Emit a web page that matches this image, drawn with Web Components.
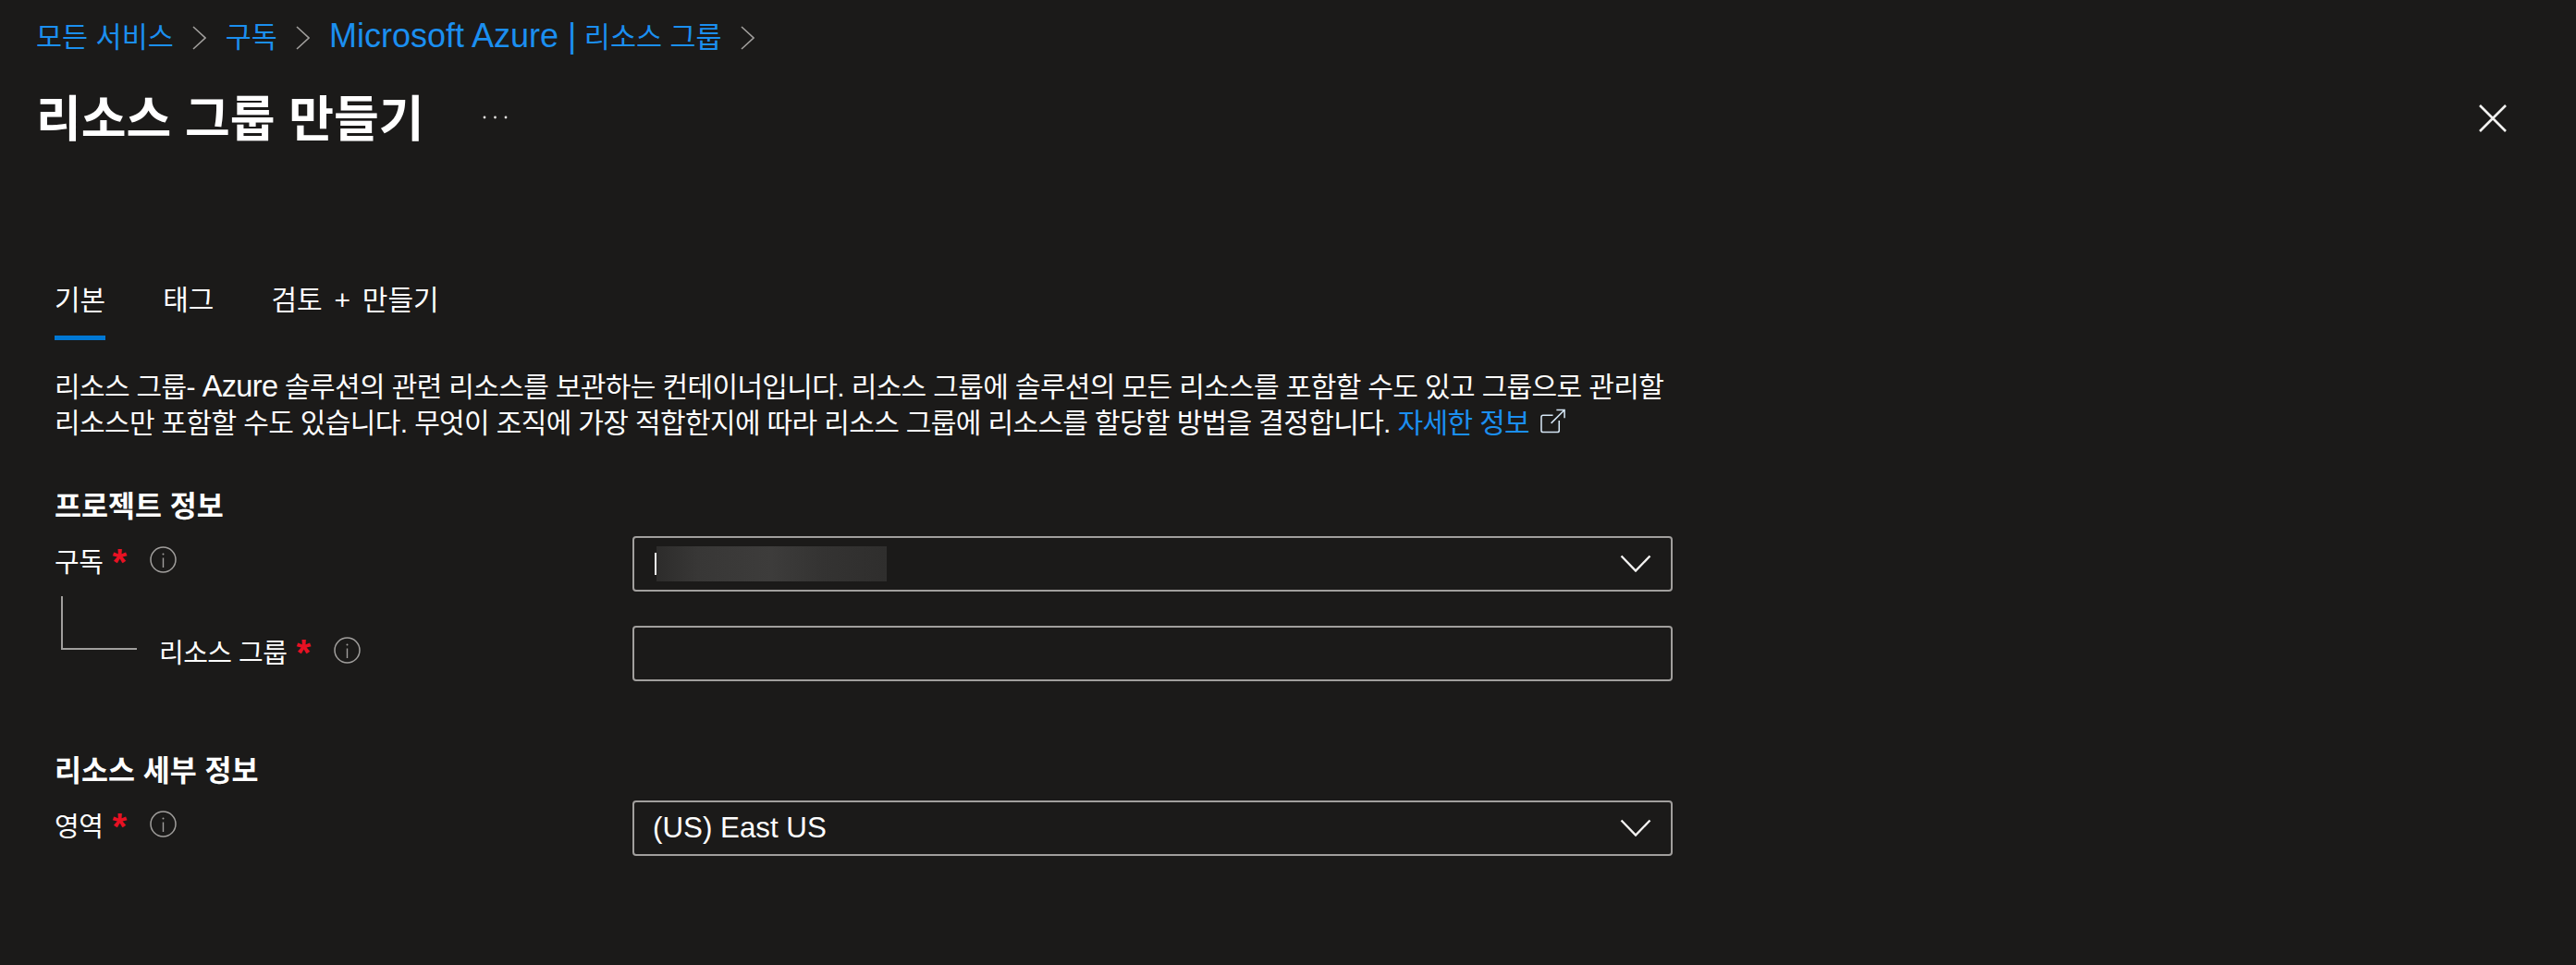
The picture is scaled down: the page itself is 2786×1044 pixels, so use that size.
<!DOCTYPE html>
<html lang="ko">
<head>
<meta charset="utf-8">
<title>리소스 그룹 만들기</title>
<style>
html,body{margin:0;padding:0;background:#1b1a19;}
body{width:2786px;height:1044px;overflow:hidden;color:#fff;font-family:"Liberation Sans","Noto Sans CJK KR",sans-serif;font-size:30px;}
.lat{font-size:36px;}
.az{font-size:32.5px;}
</style>
</head>
<body>
<az-blade>
  <az-breadcrumb slot="crumbs">
    <az-crumb>모든 서비스</az-crumb>
    <az-crumb>구독</az-crumb>
    <az-crumb><span class="lat">Microsoft Azure |</span> 리소스 그룹</az-crumb>
  </az-breadcrumb>
  <az-title slot="title">리소스 그룹 만들기</az-title>
  <az-tabs>
    <az-tab active>기본</az-tab>
    <az-tab>태그</az-tab>
    <az-tab>검토 + 만들기</az-tab>
  </az-tabs>
  <az-desc>리소스 그룹- <span class="az">Azure</span> 솔루션의 관련 리소스를 보관하는 컨테이너입니다. 리소스 그룹에 솔루션의 모든 리소스를 포함할 수도 있고 그룹으로 관리할<br>리소스만 포함할 수도 있습니다. 무엇이 조직에 가장 적합한지에 따라 리소스 그룹에 리소스를 할당할 방법을 결정합니다. <az-link>자세한 정보</az-link></az-desc>
  <az-section style="margin-top:51px">프로젝트 정보</az-section>
  <az-row style="margin-top:12px" label-top="-2">
    <az-label slot="label">구독</az-label>
    <az-select slot="control" blurred></az-select>
  </az-row>
  <az-row style="margin-top:37px" label-top="-1">
    <az-tree slot="label"></az-tree>
    <az-label slot="label">리소스 그룹</az-label>
    <az-input slot="control"></az-input>
  </az-row>
  <az-section style="margin-top:77px">리소스 세부 정보</az-section>
  <az-row style="margin-top:12px" label-top="-2">
    <az-label slot="label">영역</az-label>
    <az-select slot="control">(US) East US</az-select>
  </az-row>
</az-blade>
<script>
function def(name, html, setup){
  customElements.define(name, class extends HTMLElement{
    constructor(){super();this.attachShadow({mode:'open'}).innerHTML=html;}
    connectedCallback(){ if(setup) setup(this); }
  });
}
def('az-blade',`<style>
  :host{display:block;position:relative;height:1044px;}
  header{padding-left:39px;}
  main{padding-left:59px;}
  .close{position:absolute;left:2681px;top:113px;width:30px;height:30px;display:block;}
</style>
<header><slot name="crumbs"></slot><slot name="title"></slot></header>
<svg class="close" viewBox="0 0 30 30" aria-hidden="true"><path d="M1 1L29 29M29 1L1 29" stroke="#f3f2f1" stroke-width="2.6" fill="none"/></svg>
<main><slot></slot></main>`);

def('az-breadcrumb',`<style>
  :host{display:flex;align-items:center;height:76px;}
</style><slot></slot>`);

def('az-crumb',`<style>
  :host{display:inline-flex;align-items:center;color:#1b8ff0;font-size:30.5px;white-space:nowrap;}
  svg{width:15px;height:26px;margin:6px 20.5px 0 20.5px;display:block;}
</style><span><slot></slot></span><svg viewBox="0 0 15 26" aria-hidden="true"><path d="M1 1L14 13L1 25" fill="none" stroke="#a19f9d" stroke-width="1.6"/></svg>`);

def('az-title',`<style>
  :host{display:flex;align-items:center;height:98px;font-size:53px;font-weight:700;color:#fff;white-space:nowrap;}
  .more{margin-left:63px;width:27px;height:6px;display:block;margin-top:4px;}
</style><slot></slot><svg class="more" viewBox="0 0 27 6" aria-hidden="true"><circle cx="2" cy="3" r="1.4" fill="#e1dfdd"/><circle cx="13.5" cy="3" r="1.4" fill="#e1dfdd"/><circle cx="25" cy="3" r="1.4" fill="#e1dfdd"/></svg>`);

def('az-tabs',`<style>
  :host{display:flex;gap:62px;margin-top:108px;}
</style><slot></slot>`);

def('az-tab',`<style>
  :host{display:block;height:86px;box-sizing:border-box;padding-top:24px;line-height:38px;font-size:30px;word-spacing:4.5px;color:#fff;white-space:nowrap;border-bottom:5px solid transparent;}
  :host([active]){border-bottom-color:#0078d4;}
</style><slot></slot>`);

def('az-desc',`<style>
  :host{display:block;margin-top:31px;font-size:30px;letter-spacing:-.63px;line-height:39px;color:#fff;white-space:nowrap;}
</style><slot></slot>`);

def('az-link',`<style>
  :host{display:inline;color:#1b8ff0;}
  svg{width:27px;height:27px;display:inline-block;vertical-align:-1px;margin-left:12px;}
</style><slot></slot><svg viewBox="0 0 28 27" aria-hidden="true"><path d="M14 7H3Q1 7 1 9V24Q1 26 3 26H19Q21 26 21 24V13M12 16L27 1M18 1H27V10" fill="none" stroke="#d5e6f5" stroke-width="1.6"/></svg>`);

def('az-section',`<style>
  :host{display:block;height:40px;line-height:40px;font-size:31.5px;font-weight:700;color:#fff;white-space:nowrap;}
</style><slot></slot>`);

def('az-row',`<style>
  :host{display:grid;grid-template-columns:625px 1125px;}
  .l{display:flex;align-items:flex-start;}
</style><div class="l"><slot name="label"></slot></div><slot name="control"></slot>`);

def('az-label',`<style>
  :host{display:flex;align-items:center;height:56px;font-size:29px;letter-spacing:-.5px;color:#fff;white-space:nowrap;}
  .s{color:#e81123;margin-left:10px;font-size:40px;font-weight:700;line-height:1;align-self:flex-start;margin-top:10px;width:15px;}
  svg{width:29px;height:29px;margin-left:26px;display:block;margin-top:-2px;}
</style><slot></slot><span class="s">*</span><svg viewBox="0 0 29 29" aria-hidden="true"><circle cx="14.5" cy="14.5" r="13.5" fill="none" stroke="#a19f9d" stroke-width="1.5"/><path d="M14.5 12.5V23" stroke="#a19f9d" stroke-width="1.4"/><circle cx="14.5" cy="8.5" r="1" fill="#a19f9d"/></svg>`,
  el=>{ const t=el.closest('az-row'); if(t){ const v=+t.getAttribute('label-top')||0; el.style.marginTop=v+'px'; } });

def('az-tree',`<style>
  :host{display:block;flex:none;box-sizing:border-box;width:82px;height:58px;margin:-32px 24px 0 7px;border-left:2px solid #a19f9d;border-bottom:2px solid #a19f9d;}
</style>`);

const field=`:host{display:flex;align-items:center;box-sizing:border-box;height:60px;border:2px solid #a19f9d;border-radius:4px;color:#fff;font-size:31.3px;white-space:nowrap;}`;
def('az-select',`<style>${field}
  :host{padding-left:20px;}
  .v{flex:1;display:flex;align-items:center;}
  .caret{display:none;width:2px;height:24px;background:#f3f2f1;margin-left:2px;}
  .blur{display:none;width:249px;height:38px;margin-left:0;background:linear-gradient(90deg,#2d2c2b 0%,#383736 18%,#3d3c3b 50%,#343332 72%,#2f2e2d 100%);}
  :host([blurred]) .caret,:host([blurred]) .blur{display:block;}
  svg{width:34px;height:20px;margin-right:21px;display:block;}
</style><div class="v"><div class="caret"></div><div class="blur"></div><slot></slot></div><svg viewBox="0 0 34 20" aria-hidden="true"><path d="M1.5 1.5L17 17.5L32.5 1.5" fill="none" stroke="#f3f2f1" stroke-width="2.4"/></svg>`);

def('az-input',`<style>${field}</style>`);
</script>
</body>
</html>
